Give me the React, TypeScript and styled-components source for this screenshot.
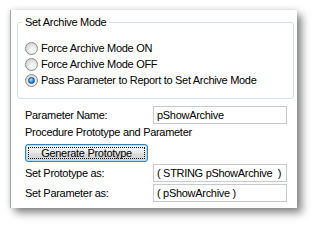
import styled, { createGlobalStyle } from 'styled-components';

const GlobalStyle = createGlobalStyle`
  html, body {
    margin: 0;
    padding: 0;
    background: #ffffff;
  }
  body {
    font-family: "Liberation Sans", Arial, sans-serif;
    font-size: 11px;
    letter-spacing: -0.3px;
    color: #000;
  }
`;

const archiveModes = [
  { id: 'on', label: 'Force Archive Mode ON' },
  { id: 'off', label: 'Force Archive Mode OFF' },
  { id: 'pass', label: 'Pass Parameter to Report to Set Archive Mode' },
];

const App = () => {
  const selected = 'pass';
  return (
    <Page>
      <GlobalStyle />
      <Panel>
        <Group>
          <Legend>Set Archive Mode</Legend>
          {archiveModes.map((mode) => (
            <RadioRow key={mode.id}>
              <Radio checked={mode.id === selected} />
              <RadioLabel>{mode.label}</RadioLabel>
            </RadioRow>
          ))}
        </Group>
        <Form>
          <FieldRow>
            <FieldLabel>Parameter Name:</FieldLabel>
            <TextBox>pShowArchive</TextBox>
          </FieldRow>
          <Caption>Procedure Prototype and Parameter</Caption>
          <Button>Generate Prototype</Button>
          <FieldRow gap={2}>
            <FieldLabel>Set Prototype as:</FieldLabel>
            <TextBox>(&nbsp;STRING pShowArchive&nbsp;&nbsp;)</TextBox>
          </FieldRow>
          <FieldRow gap={2}>
            <FieldLabel>Set Parameter as:</FieldLabel>
            <TextBox>( pShowArchive )</TextBox>
          </FieldRow>
        </Form>
      </Panel>
    </Page>
  );
};

const Page = styled.div`
  width: 315px;
  height: 226px;
  padding: 10px 0 0 10px;
  box-sizing: border-box;
  overflow: hidden;
`;

const Panel = styled.div`
  width: 287px;
  height: 198px;
  box-sizing: border-box;
  background: #ffffff;
  border-left: 1px solid #9ea4ad;
  box-shadow: 5px 5px 8px rgba(0, 0, 0, 0.45), 0 0 6px rgba(0, 0, 0, 0.15);
  display: flex;
  flex-direction: column;
`;

const Group = styled.fieldset`
  margin: 5px 3px 0 6px;
  padding: 11px 0 10px 7px;
  border: 1px solid #d5dfe5;
  border-radius: 3px;
  min-width: 0;
`;

const Legend = styled.legend`
  padding: 0 3px;
  margin-left: -3px;
  line-height: 14px;
  font-size: 11px;
`;

const RadioRow = styled.div`
  display: flex;
  align-items: center;
  height: 16px;
  gap: 3px;
`;

const Radio = styled.span<{ checked: boolean }>`
  position: relative;
  width: 13px;
  height: 13px;
  box-sizing: border-box;
  border-radius: 50%;
  border: 1px solid #8a8c8f;
  background: radial-gradient(circle at 60% 65%, #ffffff 0%, #e6e6e6 45%, #c9c9c9 100%);
  flex: none;

  &::after {
    content: '';
    display: ${({ checked }) => (checked ? 'block' : 'none')};
    position: absolute;
    left: 2px;
    top: 2px;
    width: 7px;
    height: 7px;
    box-sizing: border-box;
    border-radius: 50%;
    border: 1px solid #1b4f8a;
    background: radial-gradient(circle at 40% 35%, #bfe6ff 0%, #3d9be3 45%, #0d4f9c 100%);
  }
`;

const RadioLabel = styled.span`
  line-height: 14px;
  white-space: nowrap;
`;

const Form = styled.div`
  display: flex;
  flex-direction: column;
  padding: 7px 0 0 14px;
`;

const FieldRow = styled.div<{ gap?: number }>`
  display: grid;
  grid-template-columns: 128px 134px;
  align-items: center;
  margin-top: ${({ gap }) => gap ?? 0}px;
`;

const FieldLabel = styled.span`
  line-height: 14px;
  white-space: nowrap;
`;

const TextBox = styled.div`
  height: 18px;
  box-sizing: border-box;
  border: 1px solid #c6c9ce;
  padding: 0 3px;
  line-height: 16px;
  white-space: nowrap;
  overflow: hidden;
  background: #fff;
`;

const Caption = styled.div`
  margin-top: 1px;
  line-height: 14px;
`;

const Button = styled.button`
  position: relative;
  margin-top: 5px;
  width: 123px;
  height: 18px;
  box-sizing: border-box;
  padding: 0;
  border: 1px solid #3c7fb1;
  border-radius: 3px;
  box-shadow: inset 0 0 0 1px #aee0f7;
  background: linear-gradient(#f3f3f3 0%, #ebebeb 48%, #dddddd 52%, #cfcfcf 100%);
  font-family: "Liberation Sans", Arial, sans-serif;
  font-size: 11px;
  letter-spacing: -0.3px;
  line-height: 14px;
  color: #000;

  &::after {
    content: '';
    position: absolute;
    inset: 2px;
    border: 1px dotted #000;
  }
`;

export default App;
